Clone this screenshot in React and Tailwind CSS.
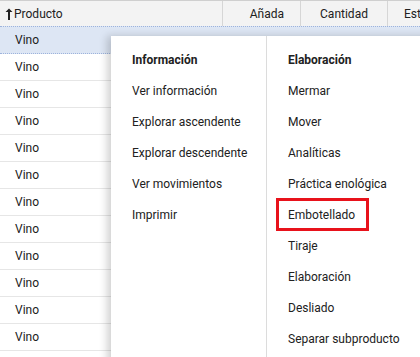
import { ArrowUp } from "lucide-react";

const info = ["Ver información", "Explorar ascendente", "Explorar descendente", "Ver movimientos", "Imprimir"];
const elab = [
  "Mermar",
  "Mover",
  "Analíticas",
  "Práctica enológica",
  "Embotellado",
  "Tiraje",
  "Elaboración",
  "Desliado",
  "Separar subproducto",
];

export default function App() {
  const rows = Array.from({ length: 12 });

  return (
    <div
      className="relative h-[357px] w-[420px] overflow-hidden bg-white text-[12px] text-[#212121]"
      style={{ fontFamily: "Roboto, 'Liberation Sans', sans-serif" }}
    >
      <div className="flex h-[26px] border-t border-[#cfcfcf] bg-[#f3f3f3]">
        <div className="flex w-[223px] shrink-0 items-center border-r border-[#d6d6d6] pl-[5px]">
          <svg width="8" height="12" viewBox="0 0 8 12" className="mr-[1px]">
            <path d="M4 0.5 L7.5 4 H5 V12 H3 V4 H0.5 Z" fill="#222" />
          </svg>
          <span>Producto</span>
        </div>
        <div className="flex w-[78px] shrink-0 items-center justify-end border-r border-[#d6d6d6] pr-[16px]">
          Añada
        </div>
        <div className="flex w-[87px] shrink-0 items-center justify-center border-r border-[#d6d6d6]">
          Cantidad
        </div>
        <div className="flex flex-1 items-center overflow-hidden whitespace-nowrap pl-[16px]">Est</div>
      </div>

      {rows.map((_, i) => (
        <div
          key={i}
          className={
            i === 0
              ? "flex h-[28px] items-center border-y border-dotted border-[#9db3dc] bg-[#dde6f4] pl-[15px]"
              : "flex h-[27px] items-center border-b border-[#e6e6e6] pl-[15px]"
          }
        >
          Vino
        </div>
      ))}

      <div className="absolute left-[111px] top-[36px] flex h-[340px] w-[330px] bg-white shadow-[-4px_0_8px_rgba(0,0,0,0.18)]">
        <div className="w-[156px] shrink-0 border-r border-[#dcdcdc] pl-[21px] pt-[8px]">
          <div className="flex h-[31px] items-center font-bold">Información</div>
          {info.map((t) => (
            <div key={t} className="flex h-[31px] items-center">
              {t}
            </div>
          ))}
        </div>
        <div className="flex-1 pl-[21px] pt-[8px]">
          <div className="flex h-[31px] items-center font-bold">Elaboración</div>
          {elab.map((t) => (
            <div key={t} className="flex h-[31px] items-center">
              {t === "Embotellado" ? (
                <span className="-ml-[12px] flex h-[33px] w-[93px] items-center border-[3px] border-[#e8121b] pl-[9px]">
                  {t}
                </span>
              ) : (
                t
              )}
            </div>
          ))}
        </div>
      </div>
    </div>
  );
}
